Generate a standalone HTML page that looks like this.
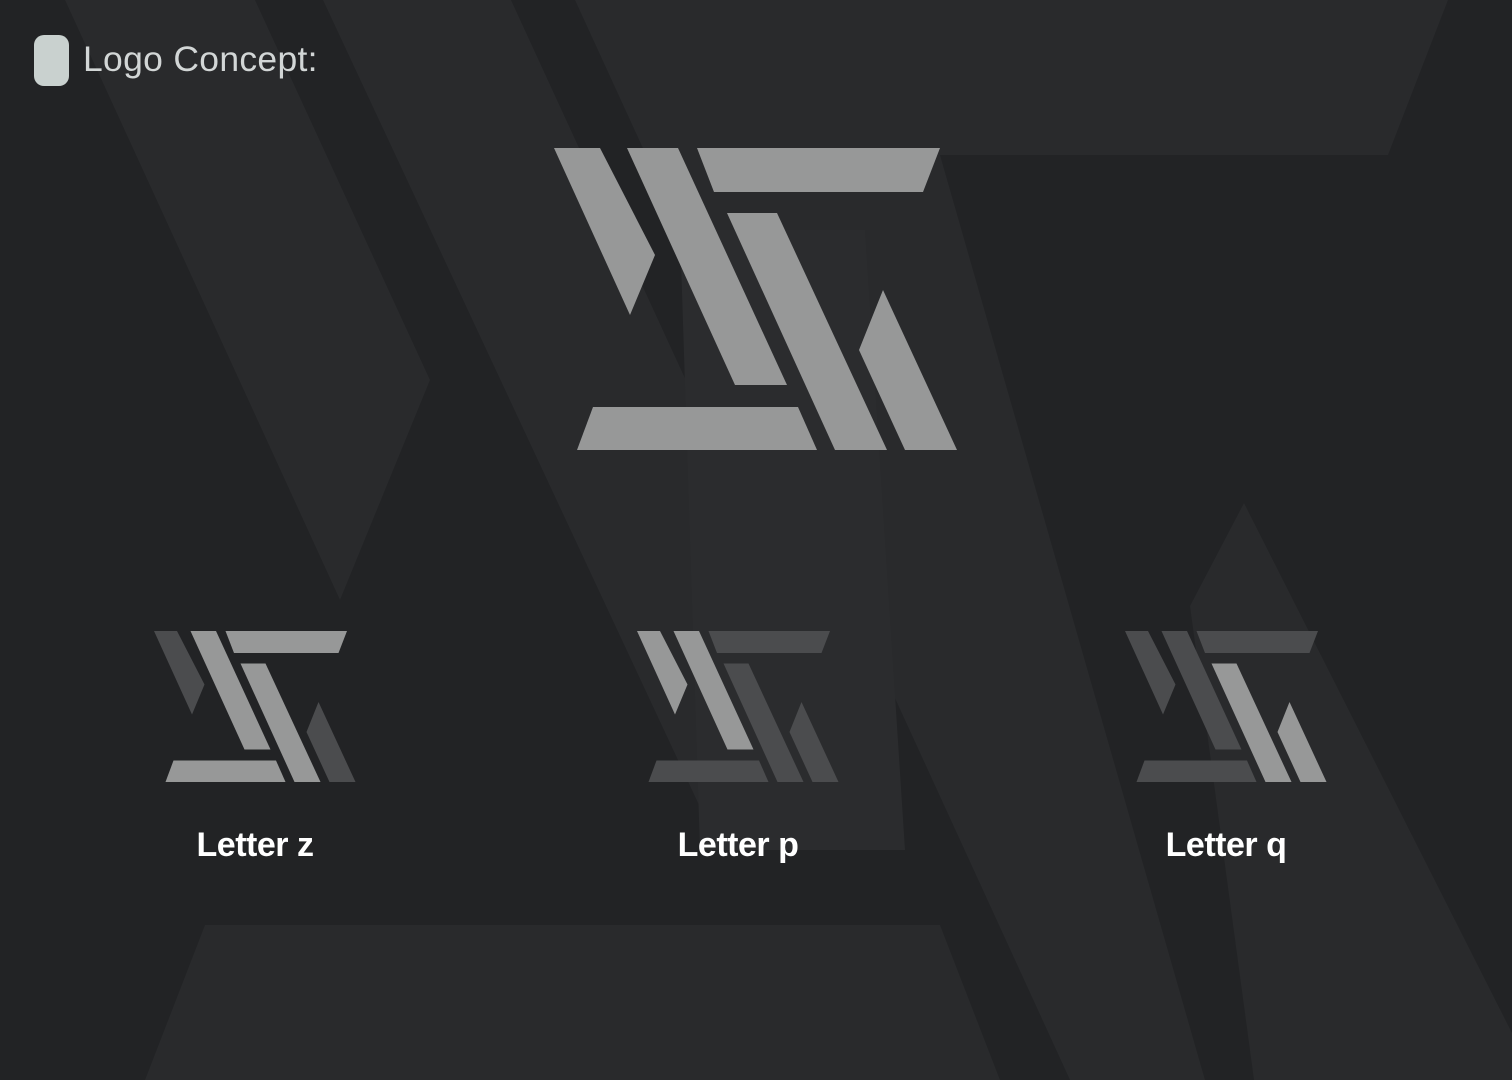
<!DOCTYPE html>
<html><head><meta charset="utf-8"><style>
html,body{margin:0;padding:0;}
body{width:1512px;height:1080px;background:#222325;position:relative;overflow:hidden;font-family:"Liberation Sans",sans-serif;}
svg{position:absolute;left:0;top:0;}
.t{position:absolute;color:#d2d6d6;font-size:35.5px;left:83px;top:39px;letter-spacing:0.3px;}
.ic{position:absolute;left:34px;top:35px;width:35px;height:51px;background:#c9d1cf;border-radius:10px;}
.l{position:absolute;color:#fff;font-weight:bold;font-size:34px;top:826px;width:300px;text-align:center;letter-spacing:-0.5px;}
</style></head><body>
<svg width="1512" height="1080" viewBox="0 0 1512 1080">
<g fill="#292a2c">
<polygon points="65,0 255,0 430,380 340,600"/>
<polygon points="323,0 511,0 902,850 720,850"/>
<polygon points="575,0 1448,0 1388,155 940,155 1205,1080 1070,1080"/>
<polygon points="1244,503 1512,1033 1512,1080 1254,1080 1190,606"/>
<polygon points="205,925 940,925 1000,1080 145,1080"/>
</g>
<polygon fill="#2b2c2e" points="680,230 865,230 905,850 700,850"/>
<g fill="#979898">
<polygon points="554,148 600,148 655,255 630,315"/>
<polygon points="627,148 678,148 787,385 735,385"/>
<polygon points="697,148 940,148 923,192 714,192"/>
<polygon points="727,213 777,213 887,450 835,450"/>
<polygon points="883,290 957,450 905,450 859,350"/>
<polygon points="593,407 798,407 817,450 577,450"/>
</g>
<g transform="translate(154,631) scale(0.5) translate(-554,-148)">
<polygon fill="#4b4c4e" points="554,148 600,148 655,255 630,315"/>
<polygon fill="#979898" points="627,148 678,148 787,385 735,385"/>
<polygon fill="#979898" points="697,148 940,148 923,192 714,192"/>
<polygon fill="#979898" points="727,213 777,213 887,450 835,450"/>
<polygon fill="#4b4c4e" points="883,290 957,450 905,450 859,350"/>
<polygon fill="#979898" points="593,407 798,407 817,450 577,450"/>
</g>
<g transform="translate(637,631) scale(0.5) translate(-554,-148)">
<polygon fill="#979898" points="554,148 600,148 655,255 630,315"/>
<polygon fill="#979898" points="627,148 678,148 787,385 735,385"/>
<polygon fill="#4b4c4e" points="697,148 940,148 923,192 714,192"/>
<polygon fill="#4b4c4e" points="727,213 777,213 887,450 835,450"/>
<polygon fill="#4b4c4e" points="883,290 957,450 905,450 859,350"/>
<polygon fill="#4b4c4e" points="593,407 798,407 817,450 577,450"/>
</g>
<g transform="translate(1125,631) scale(0.5) translate(-554,-148)">
<polygon fill="#4b4c4e" points="554,148 600,148 655,255 630,315"/>
<polygon fill="#4b4c4e" points="627,148 678,148 787,385 735,385"/>
<polygon fill="#4b4c4e" points="697,148 940,148 923,192 714,192"/>
<polygon fill="#979898" points="727,213 777,213 887,450 835,450"/>
<polygon fill="#979898" points="883,290 957,450 905,450 859,350"/>
<polygon fill="#4b4c4e" points="593,407 798,407 817,450 577,450"/>
</g>
</svg>
<div class="ic"></div>
<div class="t">Logo Concept:</div>
<div class="l" style="left:105px">Letter z</div>
<div class="l" style="left:588px">Letter p</div>
<div class="l" style="left:1076px">Letter q</div>
</body></html>
